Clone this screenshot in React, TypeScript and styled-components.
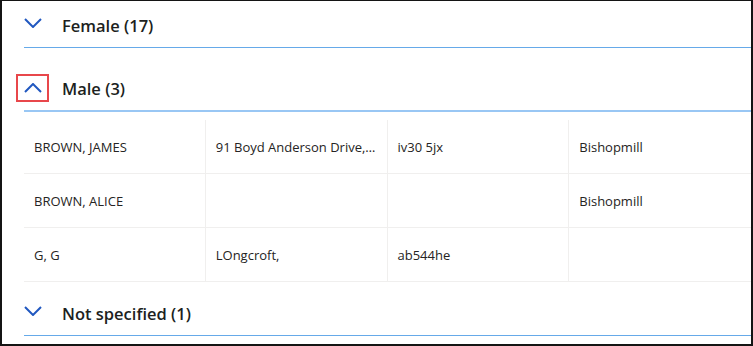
import React from "react";
import styled, { createGlobalStyle } from "styled-components";

const GlobalStyle = createGlobalStyle`
  html, body {
    margin: 0;
    padding: 0;
    background: #fff;
  }
  body {
    font-family: "Open Sans", "Noto Sans", "Liberation Sans", sans-serif;
    color: #323130;
  }
`;

const Frame = styled.div`
  width: 753px;
  height: 346px;
  box-sizing: border-box;
  border: 2px solid #141414;
  border-top-width: 1px;
  padding-left: 22px;
  overflow: hidden;
  background: #fff;
`;

const GroupHeader = styled.div<{ $expanded?: boolean; $gap: number }>`
  display: flex;
  align-items: center;
  height: 46px;
  margin-top: ${(p) => p.$gap}px;
  border-bottom: ${(p) => (p.$expanded ? "2px solid #99c7f4" : "1px solid #66aae9")};
`;

const ToggleButton = styled.button<{ $focused?: boolean }>`
  display: flex;
  align-items: center;
  justify-content: center;
  width: 33px;
  height: 28px;
  margin-left: -8px;
  margin-top: 2px;
  padding: 0;
  box-sizing: border-box;
  background: transparent;
  border: 2px solid ${(p) => (p.$focused ? "#e8474b" : "transparent")};
  cursor: pointer;
`;

const Title = styled.span`
  margin-left: 13px;
  padding-top: 3px;
  font-size: 16.5px;
  font-weight: 600;
  color: #201f1e;
`;

const Table = styled.div`
  margin-top: 8px;
`;

const Row = styled.div`
  display: grid;
  grid-template-columns: repeat(4, 1fr);
  height: 54px;
  box-sizing: border-box;
  border-bottom: 1px solid #f0efee;
`;

const Cell = styled.div`
  display: flex;
  align-items: center;
  padding-left: 10px;
  font-size: 13px;
  color: #252423;
  white-space: nowrap;
  overflow: hidden;
  border-right: 1px solid #f0efee;
  &:last-child {
    border-right: none;
  }
`;

const Chevron = ({ up }: { up?: boolean }) => (
  <svg
    width="18"
    height="10"
    viewBox="0 0 18 10"
    style={{ transform: up ? "rotate(180deg)" : "translateY(-2px)" }}
  >
    <polyline
      points="1,1 9,9 17,1"
      fill="none"
      stroke="#2158c0"
      strokeWidth="2"
    />
  </svg>
);

const rows = [
  ["BROWN, JAMES", "91 Boyd Anderson Drive,…", "iv30 5jx", "Bishopmill"],
  ["BROWN, ALICE", "", "", "Bishopmill"],
  ["G, G", "LOngcroft,", "ab544he", ""],
];

export default function App() {
  return (
    <>
      <GlobalStyle />
      <Frame>
        <GroupHeader $gap={0}>
          <ToggleButton>
            <Chevron />
          </ToggleButton>
          <Title>Female (17)</Title>
        </GroupHeader>
        <GroupHeader $gap={16} $expanded>
          <ToggleButton $focused>
            <Chevron up />
          </ToggleButton>
          <Title>Male (3)</Title>
        </GroupHeader>
        <Table>
          {rows.map((r, i) => (
            <Row key={i}>
              {r.map((c, j) => (
                <Cell key={j}>{c}</Cell>
              ))}
            </Row>
          ))}
        </Table>
        <GroupHeader $gap={7}>
          <ToggleButton>
            <Chevron />
          </ToggleButton>
          <Title>Not specified (1)</Title>
        </GroupHeader>
      </Frame>
    </>
  );
}
